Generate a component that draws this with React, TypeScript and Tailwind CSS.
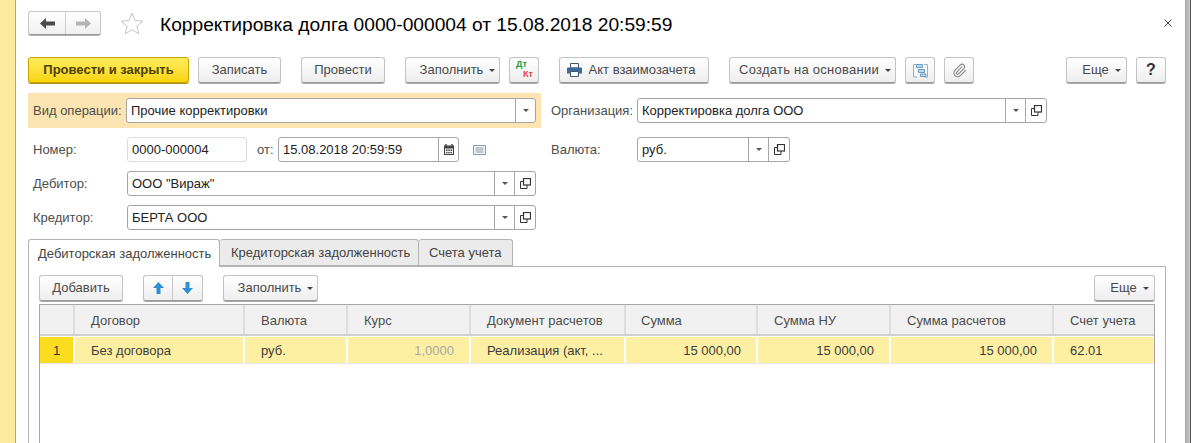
import type { ReactNode } from "react";
import { Paperclip } from "lucide-react";

const btn =
  "flex h-[26px] shrink-0 items-center justify-center rounded-[3px] border border-[#c4c4c4] border-b-[#9a9a9a] bg-gradient-to-b from-white to-[#eeeeee] text-[13px] text-[#4a4a4a] shadow-[0_1px_0_#a8a8a8]";

function Caret() {
  return <span className="ml-[6px] h-0 w-0 border-x-[3px] border-t-[3px] border-x-transparent border-t-[#444]" />;
}

function RestoreIcon() {
  return (
    <svg width="11" height="11" viewBox="0 0 11 11" fill="none" stroke="#333" strokeWidth="1">
      <rect x="3.5" y="0.5" width="7" height="6.5" strokeWidth="1.2" />
      <path d="M3.5 3.5H0.5V10.5H7V7" />
    </svg>
  );
}

function Field({
  value,
  width,
  dropdown,
  open,
  calendar,
  plain,
}: {
  value: string;
  width: string;
  dropdown?: boolean;
  open?: boolean;
  calendar?: boolean;
  plain?: boolean;
}) {
  return (
    <div
      className={`flex h-[25px] shrink-0 items-stretch rounded-[3px] border bg-white text-[13px] text-[#222] ${width} ${
        plain ? "border-[#dcdcdc]" : "border-[#a6a6a6]"
      }`}
    >
      <span className="flex flex-1 items-center overflow-hidden whitespace-nowrap pl-[4px]">{value}</span>
      {dropdown && (
        <span className="flex w-[20px] items-center justify-center border-l border-[#a6a6a6]">
          <span className="h-0 w-0 border-x-[3px] border-t-[3px] border-x-transparent border-t-[#555]" />
        </span>
      )}
      {open && (
        <span className="flex w-[21px] items-center justify-center border-l border-[#a6a6a6]">
          <RestoreIcon />
        </span>
      )}
      {calendar && (
        <span className="flex w-[20px] items-center justify-center border-l border-[#a6a6a6]">
          <svg width="10" height="11" viewBox="0 0 10 11">
            <path d="M0 1.5H10V11H0Z" fill="#444" />
            <path d="M2 0V3M8 0V3" stroke="#444" strokeWidth="1.4" />
            <path d="M1 4.5H9V10H1Z" fill="#eee" />
            <path d="M2 5.5H3.5V7H2ZM4.3 5.5H5.8V7H4.3ZM6.6 5.5H8V7H6.6ZM2 8H3.5V9.3H2ZM4.3 8H5.8V9.3H4.3ZM6.6 8H8V9.3H6.6Z" fill="#444" />
          </svg>
        </span>
      )}
    </div>
  );
}

function Label({ children, width }: { children: ReactNode; width: string }) {
  return <span className={`shrink-0 whitespace-nowrap text-[13px] text-[#4d4d4d] ${width}`}>{children}</span>;
}

const columns = [
  { title: "Договор", value: "Без договора", left: "pl-[16px]" },
  { title: "Валюта", value: "руб.", left: "pl-[16px]" },
  { title: "Курс", value: "1,0000", left: "pl-[16px]", muted: true, right: true },
  { title: "Документ расчетов", value: "Реализация (акт, ...", left: "pl-[16px]" },
  { title: "Сумма", value: "15 000,00", left: "pl-[15px]", right: true },
  { title: "Сумма НУ", value: "15 000,00", left: "pl-[16px]", right: true },
  { title: "Сумма расчетов", value: "15 000,00", left: "pl-[16px]", right: true },
  { title: "Счет учета", value: "62.01", left: "pl-[16px]" },
];

export default function App() {
  return (
    <div className="flex h-[443px] w-[1191px] overflow-hidden bg-white font-['Liberation_Sans',Arial,sans-serif]">
      <div className="w-[16px] shrink-0 border-r border-[#c8aa30] bg-[#fbeb9e]" />

      <div className="flex w-[1169px] shrink-0 flex-col pl-[12px] pt-[11px]">
        {/* header */}
        <div className="flex h-[24px] shrink-0 items-center">
          <div className="flex h-[24px] w-[73px] rounded-[3px] border border-[#c8c8c8] border-b-[#9a9a9a] bg-gradient-to-b from-white to-[#f0f0f0] shadow-[0_1px_0_#b0b0b0]">
            <span className="flex w-[37px] items-center justify-center border-r border-[#cfcfcf]">
              <svg width="15" height="11" viewBox="0 0 15 11" fill="#4a4a4a">
                <path d="M0 5.5 6 0V3.5H15V7.5H6V11Z" />
              </svg>
            </span>
            <span className="flex flex-1 items-center justify-center">
              <svg width="15" height="11" viewBox="0 0 15 11" fill="#b4b4b4">
                <path d="M15 5.5 9 0V3.5H0V7.5H9V11Z" />
              </svg>
            </span>
          </div>
          <svg className="ml-[19px]" width="24" height="23" viewBox="0 0 24 23" fill="none" stroke="#c4c4c4">
            <path d="M12 1 15 8.6 23 9.2 16.8 14.3 18.9 22 12 17.7 5.1 22 7.2 14.3 1 9.2 9 8.6Z" />
          </svg>
          <h1 className="ml-[16px] mt-[4px] whitespace-nowrap text-[19.2px] font-normal leading-[24px] text-black">
            Корректировка долга 0000-000004 от 15.08.2018 20:59:59
          </h1>
          <svg className="ml-auto mr-[13px]" width="8" height="8" viewBox="0 0 8 8" stroke="#444" strokeWidth="1">
            <path d="M0.5 0.5 7.5 7.5M7.5 0.5 0.5 7.5" />
          </svg>
        </div>

        {/* command bar */}
        <div className="mt-[22px] flex shrink-0 items-start">
          <button className="flex h-[26px] w-[161px] shrink-0 items-center justify-center rounded-[3px] border border-[#c9a400] bg-gradient-to-b from-[#ffee58] to-[#f8d400] text-[13px] font-bold text-[#4d4000] shadow-[0_1px_0_#a8921c]">
            Провести и закрыть
          </button>
          <button className={`${btn} ml-[9px] w-[83px]`}>Записать</button>
          <button className={`${btn} ml-[20px] w-[84px]`}>Провести</button>
          <button className={`${btn} ml-[20px] w-[95px] pl-[10px]`}>
            Заполнить
            <Caret />
          </button>
          <button className={`${btn} relative ml-[9px] w-[30px]`}>
            <span className="absolute left-[6px] top-[1px] text-[9px] font-bold leading-[10px] text-[#1a9a3c]">Дт</span>
            <span className="absolute left-[13px] top-[11px] text-[9px] font-bold leading-[10px] text-[#e8434a]">Кт</span>
          </button>
          <button className={`${btn} ml-[20px] w-[150px] pr-[6px]`}>
            <svg className="mr-[7px]" width="15" height="14" viewBox="0 0 15 14">
              <path d="M3.5 0.5H11.5V5H3.5Z" fill="#fff" stroke="#3d5a78" />
              <path d="M1 4.5H14Q15 4.5 15 5.5V10.5H12V8.5H3V10.5H0V5.5Q0 4.5 1 4.5Z" fill="#3d6a94" />
              <path d="M3.5 8.5H11.5V13.5H3.5Z" fill="#fff" stroke="#3d5a78" />
            </svg>
            Акт взаимозачета
          </button>
          <button className={`${btn} ml-[20px] w-[167px] pl-[5px]`}>
            <span className="tracking-[0.25px]">Создать на основании</span>
            <Caret />
          </button>
          <button className={`${btn} ml-[9px] w-[30px]`}>
            <svg width="15" height="15" viewBox="0 0 15 15" fill="none">
              <path d="M4 1.5H0.5V14H4M11 1.5H14.5V14H11" stroke="#8db4d4" />
              <path d="M3.5 1.5H9.5V4.5H3.5ZM5.5 6.5H11.5V9.5H5.5ZM7.5 11H13V13.5H7.5Z" fill="#bcd6ea" stroke="#6a9cc4" />
            </svg>
          </button>
          <button className={`${btn} ml-[9px] w-[30px]`}>
            <Paperclip size={15} strokeWidth={1.7} color="#858585" />
          </button>
          <button className={`${btn} ml-[92px] w-[61px] pl-[10px]`}>
            Еще
            <Caret />
          </button>
          <button className={`${btn} ml-[9px] w-[30px] text-[16px] font-bold text-[#333]`}>?</button>
        </div>

        {/* form */}
        <div className="mt-[10px] flex h-[35px] shrink-0 items-center">
          <div className="flex h-[35px] w-[513px] shrink-0 items-center bg-[#fde5b3] pl-[5px]">
            <Label width="w-[93px]">Вид операции:</Label>
            <Field value="Прочие корректировки" width="w-[410px]" dropdown />
          </div>
          <Label width="ml-[10px] w-[86px]">Организация:</Label>
          <Field value="Корректировка долга ООО" width="w-[410px]" dropdown open />
        </div>
        <div className="mt-[9px] flex h-[25px] shrink-0 items-center">
          <Label width="ml-[5px] w-[94px]">Номер:</Label>
          <Field value="0000-000004" width="w-[120px]" plain />
          <Label width="ml-[10px] w-[21px]">от:</Label>
          <Field value="15.08.2018 20:59:59" width="w-[181px]" calendar />
          <svg className="ml-[14px] shrink-0" width="13" height="10" viewBox="0 0 13 10" fill="#f4f6f8" stroke="#8d9aa8">
            <path d="M0.5 0.5H12.5V9.5H0.5ZM2.5 3H10.5M2.5 5H10.5M2.5 7H10.5" />
          </svg>
          <Label width="ml-[65px] w-[86px]">Валюта:</Label>
          <Field value="руб." width="w-[153px]" dropdown open />
        </div>
        <div className="mt-[9px] flex h-[25px] shrink-0 items-center">
          <Label width="ml-[5px] w-[94px]">Дебитор:</Label>
          <Field value='ООО "Вираж"' width="w-[409px]" dropdown open />
        </div>
        <div className="mt-[9px] flex h-[25px] shrink-0 items-center">
          <Label width="ml-[5px] w-[94px]">Кредитор:</Label>
          <Field value="БЕРТА ООО" width="w-[409px]" dropdown open />
        </div>

        {/* tabs */}
        <div className="relative z-10 mt-[9px] flex h-[28px] shrink-0 items-stretch text-[13px]">
          <div className="flex w-[192px] items-center rounded-t-[3px] border border-b-0 border-[#b4b4b4] bg-white pl-[9px] text-[#444]">
            Дебиторская задолженность
          </div>
          <div className="mb-[1px] flex w-[199px] items-center rounded-t-[3px] border border-l-0 border-[#b4b4b4] bg-[#ebebeb] pl-[11px] text-[#444]">
            Кредиторская задолженность
          </div>
          <div className="mb-[1px] flex w-[94px] items-center rounded-t-[3px] border border-l-0 border-[#b4b4b4] bg-[#ebebeb] pl-[10px] text-[#444]">
            Счета учета
          </div>
        </div>
        <div className="-mt-[1px] min-h-0 w-[1138px] flex-1 border-x border-t border-[#b4b4b4] px-[10px] pt-[8px]">
          <div className="flex items-start">
            <button className={`${btn} w-[84px]`}>Добавить</button>
            <div className="ml-[20px] flex h-[26px] w-[60px] shrink-0 rounded-[3px] border border-[#c4c4c4] border-b-[#9a9a9a] bg-gradient-to-b from-white to-[#eeeeee] shadow-[0_1px_0_#a8a8a8]">
              <span className="flex w-[29px] items-center justify-center border-r border-[#c8c8c8]">
                <svg width="11" height="12" viewBox="0 0 11 12" fill="#2f8fd0">
                  <path d="M5.5 0 11 6H7.5V12H3.5V6H0Z" />
                </svg>
              </span>
              <span className="flex flex-1 items-center justify-center">
                <svg width="11" height="12" viewBox="0 0 11 12" fill="#2f8fd0">
                  <path d="M5.5 12 11 6H7.5V0H3.5V6H0Z" />
                </svg>
              </span>
            </div>
            <button className={`${btn} ml-[20px] w-[95px] pl-[10px]`}>
              Заполнить
              <Caret />
            </button>
            <button className={`${btn} ml-auto w-[61px] pl-[10px]`}>
              Еще
              <Caret />
            </button>
          </div>

          <div className="mt-[3px] h-[160px] border border-[#a8a8a8]">
            <div className="grid h-[31px] grid-cols-[35px_170px_103px_123px_155px_132px_133px_163px_101px] border-b-2 border-[#cfcfcf] bg-[#f1f1f1] text-[13px] text-[#4d4d4d]">
              <div className="border-r-2 border-[#dedede]" />
              {columns.map((col) => (
                <div key={col.title} className={`flex items-center whitespace-nowrap border-r-2 border-[#dedede] pt-[2px] last:border-r-0 ${col.left}`}>
                  {col.title}
                </div>
              ))}
            </div>
            <div className="mt-[1px] grid h-[27px] grid-cols-[35px_170px_103px_123px_155px_132px_133px_163px_101px] border-b border-[#e6e6e6] bg-[#fdf0a3] text-[13px] text-[#3d3d3d]">
              <div className="flex items-center justify-center border-r-2 border-white bg-[#fcdc1e] pt-[2px] text-[#333]">1</div>
              {columns.map((col) => (
                <div
                  key={col.title}
                  className={`flex items-center whitespace-nowrap border-r-2 border-white pt-[2px] last:border-r-0 ${col.left} ${
                    col.right ? "justify-end pr-[15px]" : ""
                  } ${col.muted ? "text-[#a8a8a8]" : ""}`}
                >
                  {col.value}
                </div>
              ))}
            </div>
          </div>
        </div>
      </div>

      <div className="w-[5px] shrink-0 bg-gradient-to-r from-[#a8a8a8] to-[#cbcbcb]" />
      <div className="w-[1px] shrink-0 bg-[#555]" />
    </div>
  );
}
